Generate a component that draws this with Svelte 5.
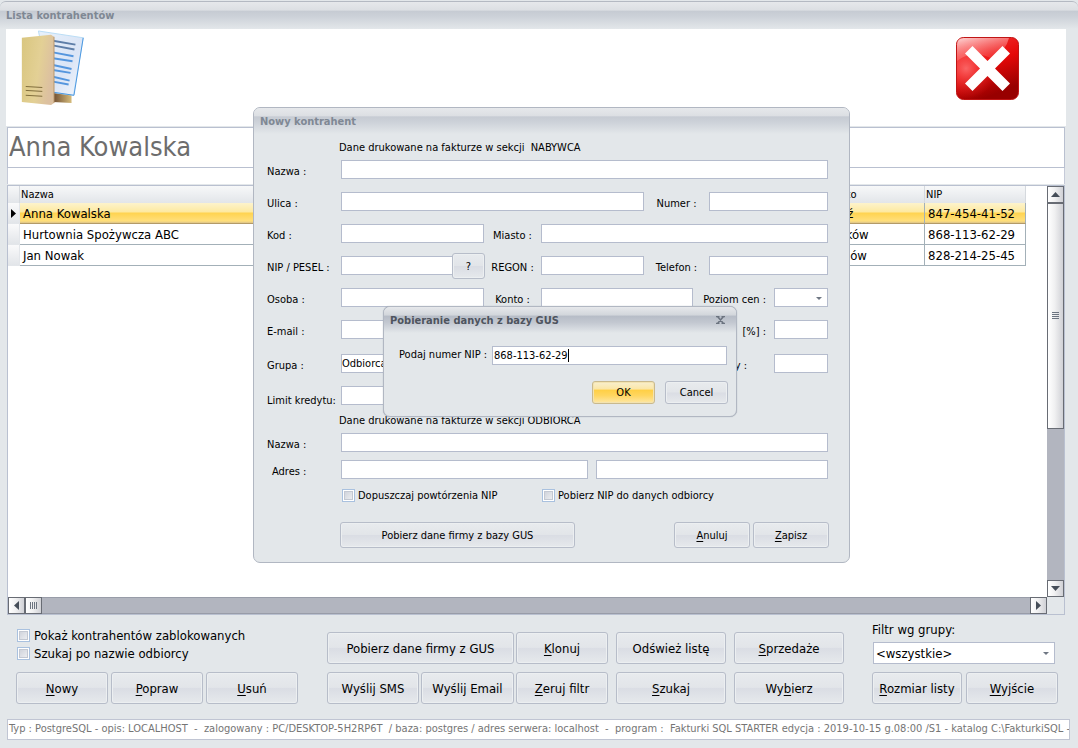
<script>
  let rows = $state([
    { name: 'Anna Kowalska', city: 'Łódź', nip: '847-454-41-52' },
    { name: 'Hurtownia Spożywcza ABC', city: 'Kraków', nip: '868-113-62-29' },
    { name: 'Jan Nowak', city: 'Tarnów', nip: '828-214-25-45' },
  ]);
  let selected = $state(0);
  let showForm = $state(true);
  let showGus = $state(true);
  let nip = $state('868-113-62-29');

  // "&" marks the underlined shortcut letter
  const editButtons = ['&Nowy', '&Popraw', '&Usuń'];
  const listButtons = [
    { text: 'Pobierz dane firmy z GUS', wide: true },
    { text: '&Klonuj' },
    { text: 'Odśwież listę', gap: true },
    { text: '&Sprzedaże', gap: true },
    { text: 'Wyślij SMS' },
    { text: 'Wyślij Email' },
    { text: '&Zeruj filtr' },
    { text: '&Szukaj', gap: true },
    { text: 'Wy&bierz', gap: true },
  ];

  const status =
    'Typ : PostgreSQL - opis: LOCALHOST  -  zalogowany : PC/DESKTOP-5H2RP6T  / baza: postgres / adres serwera: localhost  -  program :  Fakturki SQL STARTER edycja : 2019-10-15 g.08:00 /S1 - katalog C:\\FakturkiSQL - ka';

  function split(text) {
    const i = text.indexOf('&');
    if (i < 0) return [text, '', ''];
    return [text.slice(0, i), text[i + 1], text.slice(i + 2)];
  }
</script>

{#snippet caption(text)}
  {@const parts = split(text)}
  <span>{parts[0]}<u>{parts[1]}</u>{parts[2]}</span>
{/snippet}

{#snippet arrow(dir)}
  <svg class="arrow {dir}" width="9" height="5" viewBox="0 0 9 5"><path d="M4.5 0L9 5H0z" fill="#454d58" /></svg>
{/snippet}

<div class="window">
  <header class="titlebar">Lista kontrahentów</header>

  <main>
    <div class="toolbar">
      <svg class="folder" width="66" height="76" viewBox="0 0 66 78">
        <defs>
          <linearGradient id="cover" x1="0" y1="0" x2="1" y2="0.3">
            <stop offset="0" stop-color="#d9c67f" />
            <stop offset="0.6" stop-color="#e3d095" />
            <stop offset="1" stop-color="#dcc0a0" />
          </linearGradient>
          <linearGradient id="back" x1="0" y1="0" x2="1" y2="0">
            <stop offset="0" stop-color="#6e4c30" />
            <stop offset="1" stop-color="#d6bc7c" />
          </linearGradient>
          <linearGradient id="sheet" x1="0" y1="0" x2="1" y2="1">
            <stop offset="0" stop-color="#e8f1fb" />
            <stop offset="0.6" stop-color="#dbe5f6" />
            <stop offset="1" stop-color="#f5f8fd" />
          </linearGradient>
        </defs>
        <path d="M32 62L51 66V75L32 74z" fill="url(#back)" />
        <path d="M17 1L63 8L53 67L30 64z" fill="url(#sheet)" stroke="#b9dcf5" />
        <path d="M63 8L53.500 67L33 64" fill="none" stroke="#4a96e0" />
        <g stroke-width="2">
          <path d="M32 11L55 15M33 16L54 20" stroke="#5e7ea8" />
          <path d="M32 23L53 27M32 29L52 32M32 36L51 40M32 41L50 44M32 48L49 52M32 53L48 56" stroke="#5596de" />
        </g>
        <path d="M0 8L30 5L33 7V75L30 77L0 74z" fill="url(#cover)" />
        <path d="M33 7V75" stroke="#b9966c" />
        <path d="M4 58L21 59M4 62L21 63M4 67L21 68" stroke="#7d6b3a" />
      </svg>
      <button class="close-app" aria-label="Zamknij">
        <svg width="64" height="64" viewBox="0 0 64 64">
          <defs>
            <linearGradient id="red" x1="0" y1="0" x2="0.4" y2="1">
              <stop offset="0" stop-color="#f53b3b" />
              <stop offset="0.55" stop-color="#e50808" />
              <stop offset="1" stop-color="#980000" />
            </linearGradient>
            <linearGradient id="shine" x1="0" y1="0" x2="0.6" y2="1">
              <stop offset="0" stop-color="#fff" stop-opacity="0.8" />
              <stop offset="1" stop-color="#ff5050" stop-opacity="0.3" />
            </linearGradient>
            <radialGradient id="glow" cx="0.15" cy="0.5" r="0.5">
              <stop offset="0" stop-color="#ff7a7a" stop-opacity="0.8" />
              <stop offset="1" stop-color="#ff3030" stop-opacity="0" />
            </radialGradient>
          </defs>
          <rect x="0.5" y="0.5" width="62" height="62" rx="7" fill="url(#red)" stroke="#c01515" />
          <rect x="1" y="1" width="61" height="61" rx="7" fill="url(#glow)" />
          <path d="M1 24V8Q1 1 8 1H53Q50 14 36 22Q30 18 20 17Q8 18 1 24z" fill="url(#shine)" />
          <path d="M16.500 9L31.500 24L46.500 9L54 16.500L39 31.500L54 46.500L46.500 54L31.500 39L16.500 54L9 46.500L24 31.500L9 16.500z" fill="#fff" />
        </svg>
      </button>
    </div>

    <h1>{rows[selected].name}</h1>
    <div class="strip"></div>

    <div class="list">
      <div class="rows">
        <table>
          <colgroup>
            <col class="c-mark" />
            <col />
            <col class="c-city" />
            <col class="c-nip" />
          </colgroup>
          <thead>
            <tr><th></th><th>Nazwa</th><th>Miasto</th><th>NIP</th></tr>
          </thead>
          <tbody>
            {#each rows as row, i}
              <tr class:selected={i === selected} onclick={() => (selected = i)}>
                <td class="mark">
                  {#if i === selected}
                    <svg width="5" height="9" viewBox="0 0 5 9"><path d="M0 0L5 4.500L0 9z" /></svg>
                  {/if}
                </td>
                <td>{row.name}</td>
                <td>{row.city}</td>
                <td>{row.nip}</td>
              </tr>
            {/each}
          </tbody>
        </table>
      </div>
      <div class="scroll vertical">
        <span class="step">{@render arrow('up')}</span>
        <div class="track">
          <span class="thumb"><svg width="7" height="8" viewBox="0 0 7 8"><path d="M0 .5H7M0 2.500H7M0 4.500H7M0 6.500H7" stroke="#6c7480" /></svg></span>
        </div>
        <span class="step">{@render arrow('down')}</span>
      </div>
      <div class="scroll horizontal">
        <span class="step">{@render arrow('left')}</span>
        <div class="track">
          <span class="thumb"><svg width="8" height="7" viewBox="0 0 8 7"><path d="M.5 0V7M2.500 0V7M4.500 0V7M6.500 0V7" stroke="#6c7480" /></svg></span>
        </div>
        <span class="step">{@render arrow('right')}</span>
      </div>
    </div>

    <div class="actions">
      <div class="left">
        <label class="check"><input type="checkbox" />Pokaż kontrahentów zablokowanych</label>
        <label class="check"><input type="checkbox" />Szukaj po nazwie odbiorcy</label>
        <div class="buttons">
          {#each editButtons as text}
            <button class="btn">{@render caption(text)}</button>
          {/each}
        </div>
      </div>
      <div class="middle">
        {#each listButtons as b}
          <button class="btn" class:wide={b.wide} class:gap={b.gap}>{@render caption(b.text)}</button>
        {/each}
      </div>
      <div class="right">
        <label for="group">Filtr wg grupy:</label>
        <div class="select">
          <select id="group"><option>&lt;wszystkie&gt;</option></select>
        </div>
        <div class="buttons">
          <button class="btn">{@render caption('&Rozmiar listy')}</button>
          <button class="btn">{@render caption('&Wyjście')}</button>
        </div>
      </div>
    </div>
  </main>

  <footer>{status}</footer>
</div>

{#if showForm}
  <div class="dialog form" role="dialog" aria-label="Nowy kontrahent">
    <header class="titlebar">Nowy kontrahent</header>
    <p>Dane drukowane na fakturze w sekcji&nbsp; NABYWCA</p>
    <div class="fields buyer">
      <label for="name">Nazwa :</label>
      <input id="name" class="to-end" />

      <label for="street">Ulica :</label>
      <input id="street" class="span-3" />
      <label for="number" class="inner">Numer :</label>
      <input id="number" class="to-end" />

      <label for="code">Kod :</label>
      <input id="code" />
      <label for="city" class="inner">Miasto :</label>
      <input id="city" class="to-end" />

      <label for="nip">NIP / PESEL :</label>
      <div class="lookup">
        <input id="nip" />
        <button class="btn" onclick={() => (showGus = true)}>?</button>
      </div>
      <label for="regon" class="inner">REGON :</label>
      <input id="regon" />
      <label for="phone" class="inner">Telefon :</label>
      <input id="phone" class="to-end" />

      <label for="person">Osoba :</label>
      <input id="person" />
      <label for="account" class="inner">Konto :</label>
      <input id="account" class="account" />
      <label for="price" class="last">Poziom cen :</label>
      <div class="select"><select id="price"><option></option></select></div>

      <label for="email">E-mail :</label>
      <input id="email" class="span-3" />
      <label for="discount" class="last">Rabat&nbsp; [%] :</label>
      <input id="discount" />

      <label for="kind">Grupa :</label>
      <div class="select span-3"><select id="kind"><option>Odbiorca</option></select></div>
      <label for="days" class="last days">Termin zapłaty :</label>
      <input id="days" />

      <label for="credit" class="credit">Limit kredytu:</label>
      <input id="credit" />
    </div>
    <p>Dane drukowane na fakturze w sekcji ODBIORCA</p>
    <div class="fields receiver">
      <label for="r-name">Nazwa :</label>
      <input id="r-name" class="to-end" />
      <label for="r-address" class="address">Adres :</label>
      <input id="r-address" />
      <input class="address-2" aria-label="Adres" />
    </div>
    <div class="checks">
      <label class="check"><input type="checkbox" />Dopuszczaj powtórzenia NIP</label>
      <label class="check"><input type="checkbox" />Pobierz NIP do danych odbiorcy</label>
    </div>
    <div class="form-buttons">
      <button class="btn gus-btn" onclick={() => (showGus = true)}>Pobierz dane firmy z bazy GUS</button>
      <button class="btn" onclick={() => (showForm = false)}>{@render caption('&Anuluj')}</button>
      <button class="btn">{@render caption('&Zapisz')}</button>
    </div>
  </div>
{/if}

{#if showGus}
  <div class="dialog gus" role="dialog" aria-label="Pobieranie danych z bazy GUS">
    <header class="titlebar">
      Pobieranie danych z bazy GUS
      <button class="x" aria-label="Zamknij" onclick={() => (showGus = false)}>
        <svg width="9" height="8" viewBox="0 0 9 8"><path d="M0 .5H3.500M5.500 .5H9M0 7.500H3.500M5.500 7.500H9M1.500 .5L7.500 7.500M7.500 .5L1.500 7.500" stroke="#6b737f" stroke-width="1.500" /></svg>
      </button>
    </header>
    <div class="ask">
      <label for="gus-nip">Podaj numer NIP :</label>
      <div class="entry">
        <input id="gus-nip" bind:value={nip} /><span class="caret"></span>
      </div>
    </div>
    <div class="gus-buttons">
      <button class="btn primary">OK</button>
      <button class="btn" onclick={() => (showGus = false)}>Cancel</button>
    </div>
  </div>
{/if}

<style>
  :global(body) {
    background: #e3e7ea;
    color: #000;
    font: 13px 'DejaVu Sans Condensed', 'Noto Sans', sans-serif;
  }
  :global(*) {
    box-sizing: border-box;
  }
  input,
  select,
  button {
    font: inherit;
    color: inherit;
    margin: 0;
    border-radius: 0;
  }
  svg {
    display: block;
  }
  .window {
    position: relative;
    display: flex;
    flex-direction: column;
    min-height: 100vh;
    padding-bottom: 8px;
    overflow: hidden;
  }
  .titlebar {
    display: flex;
    align-items: center;
    height: 26px;
    padding: 0 6px;
    border-top: 1px solid #b4b9c2;
    border-radius: 6px 6px 0 0;
    background: linear-gradient(#e6e8eb 0, #dcdfe3 30%, #c6cbd3 34%, #cdd2d9 55%, #e3e7ea 100%);
    color: #7f8894;
    font-size: 11px;
    font-weight: bold;
  }
  .window > .titlebar {
    height: 28px;
    margin-top: 1px;
    padding-bottom: 1px;
  }
  main {
    flex: 1;
    display: flex;
    flex-direction: column;
    margin: 0 12px 0 6px;
  }
  .toolbar {
    display: flex;
    justify-content: space-between;
    align-items: flex-start;
    height: 97px;
    padding: 1px 46px 0 15px;
    background: #fff;
  }
  .close-app {
    padding: 0;
    margin-top: 7px;
    border: 0;
    background: none;
  }
  h1 {
    height: 41px;
    margin: 1px 1px 0;
    padding-left: 1px;
    border: 1px solid #b9c0d0;
    background: #fff;
    color: #6d6d6d;
    font-size: 27px;
    font-weight: normal;
    line-height: 38px;
  }
  .strip {
    height: 16px;
    margin: 0 1px;
    border: solid #c5cad8;
    border-width: 0 1px;
    background: #fff;
  }
  .list {
    flex: 1;
    display: grid;
    grid-template: 1fr 17px / 1fr 17px;
    min-height: 300px;
    margin: 1px 1px 0;
    border: 1px solid #b9c0d0;
  }
  .rows {
    background: #fff;
    padding-right: 21px;
  }
  table {
    width: 100%;
    table-layout: fixed;
    border-collapse: separate;
    border-spacing: 0;
  }
  .c-mark {
    width: 12px;
  }
  .c-city {
    width: 102px;
  }
  .c-nip {
    width: 101px;
  }
  th {
    height: 17px;
    padding: 0 1px;
    border-right: 1px solid #d5d9de;
    background: linear-gradient(#f7f8f9, #e2e5e9);
    font-size: 11px;
    font-weight: normal;
    line-height: 17px;
    text-align: left;
  }
  td {
    height: 21px;
    padding: 1px 3px 0;
    border: solid #a3b0b8;
    border-width: 0 1px 1px 0;
    background: #fff;
    line-height: 18px;
  }
  td.mark {
    padding: 0 3px;
    border-color: #e3e6ea;
    background: linear-gradient(#fafafb, #e2e5e9);
  }
  .selected td:not(.mark) {
    border-bottom-color: #b39a68;
    background: linear-gradient(#fdf3cc, #fde9a0 45%, #ffd34f 50%, #ffdf7c 90%, #dcc38a);
  }
  .scroll {
    display: flex;
    background: #b2b5bf;
  }
  .vertical {
    flex-direction: column;
  }
  .track {
    flex: 1;
    display: flex;
    flex-direction: inherit;
    border: 0 solid #989ca8;
  }
  .horizontal .track {
    border-width: 1px 0;
  }
  .step,
  .thumb {
    display: flex;
    flex: none;
    align-items: center;
    justify-content: center;
    width: 17px;
    height: 17px;
    border: 1px solid #686c74;
    background: linear-gradient(90deg, #fff, #f0f0f1 45%, #d0d1d6);
  }
  .vertical .thumb {
    height: 60%;
  }
  .horizontal .thumb {
    margin: -1px 0;
  }
  .down {
    transform: rotate(180deg);
  }
  .left.arrow {
    transform: rotate(-90deg);
  }
  .right.arrow {
    transform: rotate(90deg);
  }
  .btn {
    height: 32px;
    padding: 0;
    border: 1px solid #b7bdc9;
    border-radius: 3px;
    background: linear-gradient(#e8ebee, #e2e5e9 48%, #dadde4 52%, #e6e9ec);
    box-shadow: inset 0 0 0 1px #eceff1;
    white-space: nowrap;
  }
  u {
    text-underline-offset: 2px;
  }
  .actions {
    display: flex;
    justify-content: space-between;
    padding: 7px 8px 15px 10px;
  }
  .actions .left {
    padding: 4px 1px 0 0;
  }
  .check {
    display: flex;
    align-items: center;
    gap: 4px;
    height: 18px;
    white-space: nowrap;
  }
  .check input {
    appearance: none;
    width: 13px;
    height: 13px;
    border: 1px solid #a9c1df;
    background: linear-gradient(135deg, #c9cdd6, #f3f4f6);
    box-shadow: inset 0 0 0 1px #fff, inset 0 0 0 2px #c3c8d2;
  }
  .left .check {
    padding-left: 1px;
  }
  .buttons {
    display: grid;
    grid-template-columns: repeat(3, 92px);
    gap: 3px;
  }
  .left .buttons {
    margin-top: 10px;
  }
  .middle {
    display: grid;
    grid-template-columns: 92px 93px 92px 116px 116px;
    gap: 8px 2px;
    padding-top: 10px;
  }
  .middle .wide {
    grid-column: span 2;
  }
  .middle .gap {
    margin-left: 6px;
  }
  .right {
    display: flex;
    flex-direction: column;
  }
  .right label {
    line-height: 16px;
  }
  .right .buttons {
    grid-template-columns: 90px 92px;
    gap: 4px;
    margin-top: 8px;
  }
  .select {
    position: relative;
  }
  .select::after {
    content: '';
    position: absolute;
    top: 50%;
    right: 6px;
    border: solid transparent;
    border-top-color: #6f7783;
    border-width: 3px 3px 0;
    margin-top: -1px;
  }
  select {
    appearance: none;
    display: block;
    width: 100%;
    height: 19px;
    padding: 0 2px;
    border: 1px solid #b5bccd;
    background: #fff;
  }
  .right .select {
    margin: 4px 3px 0 1px;
  }
  .right select {
    height: 22px;
  }
  footer {
    height: 21px;
    margin: 0 8px 0 7px;
    padding-left: 1px;
    border: 1px solid #c0c5d3;
    background: #fff;
    color: #757575;
    font-size: 11px;
    line-height: 18px;
    white-space: pre;
    overflow: hidden;
  }

  .dialog {
    position: absolute;
    border: 1px solid #b1b7c2;
    border-radius: 7px;
    background: #e3e7ea;
    font-size: 11px;
  }
  .dialog .titlebar {
    border-top: 0;
  }
  .form {
    top: 107px;
    left: 253px;
    width: 597px;
    height: 456px;
  }
  .form p {
    margin: 0 0 0 85px;
    padding-top: 6px;
    height: 26px;
    line-height: 16px;
  }
  .fields {
    display: grid;
    margin: 0 21px 0 13px;
    align-items: start;
  }
  .buyer {
    grid-template-columns: 74px 143px 57px 103px 65px 65px 1fr;
    grid-template-rows: repeat(5, 32px) 34px 32px 21px;
  }
  .fields label {
    line-height: 23px;
    white-space: nowrap;
  }
  .fields .credit {
    line-height: 29px;
  }
  .dialog input:not([type='checkbox']) {
    width: 100%;
    min-width: 0;
    height: 19px;
    padding: 0 2px;
    border: 1px solid #b5bccd;
    background: #fff;
    outline: 0;
  }
  .dialog select {
    padding: 0;
  }
  .fields .to-end {
    grid-column-end: -1;
  }
  #name,
  #r-name {
    grid-column-start: 2;
  }
  #city {
    grid-column-start: 4;
  }
  #number,
  #phone {
    grid-column-start: 6;
  }
  .span-3 {
    grid-column: span 3;
  }
  .fields .inner {
    justify-self: center;
  }
  .dialog .fields .account {
    grid-column: 4 / 6;
    width: 152px;
  }
  .fields .last {
    grid-column: 6;
    justify-self: end;
    padding-right: 8px;
  }
  .fields .days {
    padding-right: 27px;
  }
  .lookup {
    display: flex;
  }
  .lookup .btn {
    flex: none;
    width: 33px;
    height: 26px;
    margin: -3px -1px -4px;
  }
  .receiver {
    grid-template-columns: 74px 247px 1fr;
    grid-template-rows: 27px 26px;
  }
  .address {
    padding-left: 5px;
  }
  .address-2 {
    justify-self: end;
  }
  .form .receiver .address-2 {
    width: calc(100% - 8px);
  }
  .checks {
    display: grid;
    grid-template-columns: 200px 1fr;
    margin-left: 88px;
  }
  .checks .check {
    gap: 3px;
  }
  .form-buttons {
    display: flex;
    gap: 3px;
    margin: 18px 20px 0 86px;
  }
  .form-buttons .btn {
    width: 76px;
    height: 26px;
  }
  .form-buttons .gus-btn {
    width: 235px;
    margin-right: auto;
  }
  .gus {
    top: 306px;
    left: 383px;
    width: 354px;
    height: 111px;
    box-shadow: 0 0 1px #9aa1ad;
  }
  .gus .titlebar {
    color: #4e545e;
    background: linear-gradient(#e6e8eb 0, #d3d7dc 30%, #b7bdc7 36%, #c3c8d1 60%, #e3e7ea 100%);
  }
  .x {
    margin-left: auto;
    padding: 0 5px;
    border: 0;
    background: none;
  }
  .ask {
    display: flex;
    justify-content: space-between;
    padding: 13px 9px 0 15px;
  }
  .ask label {
    line-height: 17px;
  }
  .entry {
    display: flex;
    align-items: center;
    width: 235px;
    height: 19px;
    padding-left: 1px;
    border: 1px solid #b5bccd;
    background: #fff;
  }
  .gus .entry input {
    field-sizing: content;
    width: auto;
    height: 17px;
    padding: 0;
    border: 0;
  }
  .caret {
    width: 1px;
    height: 13px;
    background: #000;
  }
  .gus-buttons {
    display: flex;
    justify-content: flex-end;
    gap: 10px;
    padding: 16px 8px 0 0;
  }
  .gus-buttons .btn {
    width: 63px;
    height: 23px;
  }
  .gus-buttons .primary {
    border-color: #c9b98d;
    background: linear-gradient(#f8efcf, #fbe6a6 34%, #ffcf44 38%, #ffd661 65%, #fde7a6);
    box-shadow: inset 0 0 0 1px #f3e3b0;
  }
</style>
